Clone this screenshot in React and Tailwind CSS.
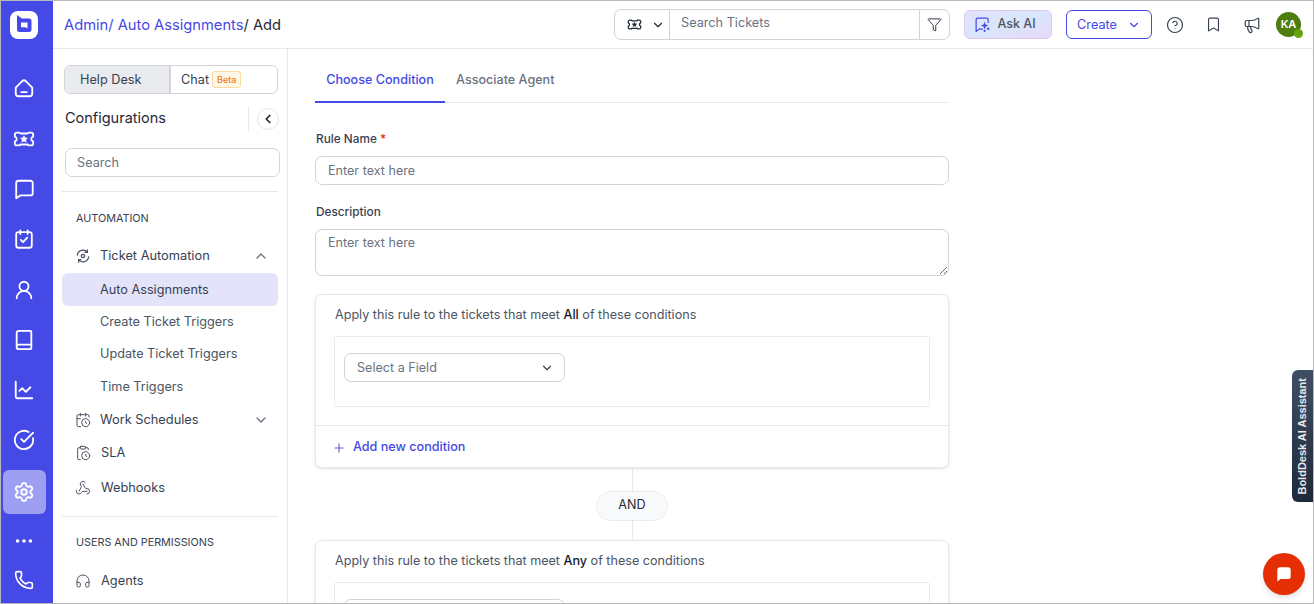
import { Book, Bookmark, CalendarClock, ChartLine, ChevronDown, ChevronLeft, ChevronUp, CircleCheckBig, CircleHelp, ClipboardClock, Ellipsis, Funnel, Headphones, Megaphone, Phone, Plus, Settings, UserRound, Webhook } from "lucide-react";

const Logo = () => (
    <svg viewBox="0 0 28 28" className="w-[28px] h-[28px] mt-[10px]">
        <rect width="28" height="28" rx="8" fill="white" />
        <path d="M7 4 L12 7.500 H19 a2.500 2.500 0 0 1 2.500 2.500 V18.500 a2.500 2.500 0 0 1 -2.500 2.500 H9.500 a2.500 2.500 0 0 1 -2.500 -2.500 Z" fill="#4549e5" />
        <path d="M11 11.500 H17.500 V17.500 L15.500 16.200 H11 Z" fill="white" />
    </svg>
);

const TicketStar = ({ className }) => (
    <svg viewBox="0 0 24 24" fill="none" stroke="currentColor" strokeWidth="2" strokeLinejoin="round" className={className}>
        <path d="M4.500 5H7a2 2 0 0 0 2 1h6a2 2 0 0 0 2-1h2.500A2.500 2.500 0 0 1 22 7.500v1.800a2.800 2.800 0 0 0 0 5.400v1.800a2.500 2.500 0 0 1-2.500 2.500H17a2 2 0 0 0-2-1H9a2 2 0 0 0-2 1H4.500A2.500 2.500 0 0 1 2 16.500v-1.800a2.800 2.800 0 0 0 0-5.400V7.500A2.500 2.500 0 0 1 4.500 5z" />
        <path d="M12 8.500l1.100 2.300 2.500.3-1.800 1.700.5 2.500-2.300-1.200-2.300 1.200.5-2.500-1.800-1.700 2.500-.3z" fill="currentColor" strokeWidth="0.800" />
    </svg>
);

const HomeIcon = ({ className }) => (
    <svg viewBox="0 0 24 24" fill="none" stroke="currentColor" strokeWidth="2" strokeLinecap="round" strokeLinejoin="round" className={className}>
        <path d="M3 11.500 10 4.400a2.800 2.800 0 0 1 4 0l7 7.100V18a3 3 0 0 1-3 3H6a3 3 0 0 1-3-3z" />
        <path d="M9 16.500h6" />
    </svg>
);

const ChatIcon = ({ className }) => (
    <svg viewBox="0 0 24 24" fill="none" stroke="currentColor" strokeWidth="2" strokeLinecap="round" strokeLinejoin="round" className={className}>
        <path d="M6 3h13a2.500 2.500 0 0 1 2.500 2.500v11a2.500 2.500 0 0 1-2.500 2.500H8l-4.500 3V5.500A2.500 2.500 0 0 1 6 3z" />
    </svg>
);

const CalCheck = ({ className }) => (
    <svg viewBox="0 0 24 24" fill="none" stroke="currentColor" strokeWidth="2" strokeLinecap="round" strokeLinejoin="round" className={className}>
        <rect x="3.500" y="4.500" width="17" height="17" rx="2.500" />
        <path d="M8 2.500v4M16 2.500v4M8.500 13l2.500 2.500 4.500-5" />
    </svg>
);

const AskAiIcon = ({ className }) => (
    <svg viewBox="0 0 24 24" fill="none" stroke="currentColor" strokeWidth="1.700" strokeLinecap="round" strokeLinejoin="round" className={className}>
        <path d="M20 9V5a2 2 0 0 0-2-2H5a2 2 0 0 0-2 2v17l4-3.500h5" />
        <path d="M15 9l1.300 3.200 3.200 1.300-3.200 1.300L15 18l-1.300-3.200-3.200-1.300 3.200-1.300z" fill="currentColor" strokeWidth="0.600" />
        <path d="M20 16.500v3M18.500 18h3M15 20v2M14 21h2" strokeWidth="1.400" />
    </svg>
);

const AutomationIcon = ({ className }) => (
    <svg viewBox="0 0 24 24" fill="none" stroke="currentColor" strokeLinecap="round" strokeLinejoin="round" className={className}>
        <path d="M3.500 10.500A8.500 8.500 0 0 1 18.500 6.500M20.500 13.500A8.500 8.500 0 0 1 5.500 17.500" strokeWidth="2" />
        <path d="M18.500 3v3.500H15M5.500 21v-3.500H9" strokeWidth="2" />
        <circle cx="12" cy="12" r="2.500" strokeWidth="2" />
    </svg>
);

const railItems = [
    { Icon: TicketStar, cls: "mt-[29px]" },
    { Icon: ChatIcon, cls: "mt-[28px]" },
    { Icon: CalCheck, cls: "mt-[28px]" },
    { Icon: UserRound, cls: "mt-[29px]" },
    { Icon: Book, cls: "mt-[28px]" },
    { Icon: ChartLine, cls: "mt-[28px]" },
    { Icon: CircleCheckBig, cls: "mt-[28px]" },
];

const Rail = () => {
    return (
        <aside className="w-[52px] h-full bg-[#4549e5] shrink-0 flex flex-col items-center pr-[6px] text-white">
            <Logo />
            <HomeIcon className="w-[22px] h-[22px] mt-[38px]" />
            {railItems.map((item, i) => (
                <item.Icon key={i} className={`w-[22px] h-[22px] stroke-2 ${item.cls}`} />
            ))}
            <div className="w-[43px] h-[44px] mt-[19px] shrink-0 rounded-[6px] bg-[#9c9ff2] flex items-center justify-center">
                <Settings className="w-[22px] h-[22px]" />
            </div>
            <Ellipsis className="w-[22px] h-[22px] mt-[16px]" />
            <Phone className="w-[20px] h-[20px] mt-[18px]" />
        </aside>
    );
};

const MenuLink = ({ Icon, label, arrow, iconGap = "gap-[9px]", cls = "" }) => {
    return (
        <div className={`flex items-center ${iconGap} pl-[13px] pr-[9px] text-[12.800px] text-[#374151] ${cls}`}>
            <Icon className="w-[16px] h-[16px] text-[#4b5563] stroke-[1.500]" />
            <span>{label}</span>
            {arrow && <span className="ml-auto text-[#6b7280]">{arrow}</span>}
        </div>
    );
};

const SubLink = ({ label, cls = "" }) => {
    return <div className={`pl-[38px] text-[12.700px] leading-[20px] text-[#4b5563] ${cls}`}>{label}</div>;
};

const Sidebar = () => {
    return (
        <aside className="w-[235px] h-full shrink-0 border-r border-[#e5e7eb] pl-[9px] pr-[9px] pt-[16px] overflow-hidden">
            <div className="ml-[2px] h-[29px] w-[214px] flex border border-[#d1d5db] rounded-[6px] text-[12.700px] overflow-hidden">
                <div className="w-[106px] bg-[#e9ebef] border-r-2 border-[#d1d5db] text-[#374151] flex items-center pl-[15px]">Help Desk</div>
                <div className="flex-1 flex items-center pl-[10px] gap-[3px] text-[#374151]">
                    Chat
                    <span className="text-[9px] leading-[15px] px-[4px] font-medium rounded-[3px] border border-[#fcd9a0] bg-[#fff7e6] text-[#ea7a14]">Beta</span>
                </div>
            </div>
            <div className="ml-[3px] mt-[11px] h-[27px] flex items-center">
                <h2 className="text-[14.500px] text-[#1f2937] font-normal mb-[2px]">Configurations</h2>
                <div className="ml-auto w-px h-[25px] bg-[#e5e7eb]"></div>
                <button className="ml-[8px] mr-[-1px] w-[22px] h-[22px] rounded-full border border-[#e5e7eb] flex items-center justify-center">
                    <ChevronLeft className="w-[14px] h-[14px] text-[#1f2937] stroke-[3]" />
                </button>
            </div>
            <input placeholder="Search" className="mt-[16px] ml-[3px] w-[215px] h-[29px] block border border-[#d1d5db] rounded-[7px] pl-[11px] pr-[11px] text-[12.700px] placeholder:text-[#6b7280] outline-none" />
            <div className="h-px bg-[#e5e7eb] mt-[14px]"></div>
            <div className="pl-[14px] mt-[20px] text-[10.800px] leading-[14px] text-[#374151]">AUTOMATION</div>
            <MenuLink Icon={AutomationIcon} label="Ticket Automation" arrow={<ChevronUp className="w-[16px] h-[16px]" />} cls="mt-[20px] h-[20px]" />
            <div className="mt-[7px] h-[33px] w-[216px] rounded-[6px] bg-[#e3e4f9] flex items-center">
                <SubLink label="Auto Assignments" cls="!text-[#374151]" />
            </div>
            <SubLink label="Create Ticket Triggers" cls="mt-[6px]" />
            <SubLink label="Update Ticket Triggers" cls="mt-[12px]" />
            <SubLink label="Time Triggers" cls="mt-[13px]" />
            <MenuLink Icon={CalendarClock} label="Work Schedules" arrow={<ChevronDown className="w-[16px] h-[16px]" />} cls="mt-[13px] h-[20px]" />
            <MenuLink Icon={ClipboardClock} label="SLA" iconGap="gap-[10px]" cls="mt-[13px] h-[20px]" />
            <MenuLink Icon={Webhook} label="Webhooks" iconGap="gap-[10px]" cls="mt-[15px] h-[20px]" />
            <div className="h-px bg-[#e5e7eb] mt-[18px]"></div>
            <div className="pl-[14px] mt-[19px] text-[10.800px] leading-[14px] text-[#374151]">USERS AND PERMISSIONS</div>
            <MenuLink Icon={Headphones} label="Agents" iconGap="gap-[10px]" cls="mt-[21px] h-[20px]" />
        </aside>
    );
};

const Header = () => {
    return (
        <header className="h-[48px] shrink-0 border-b border-[#e5e7eb] flex items-center pl-[11px] pr-[12px]">
            <div className="text-[14.700px] text-[#1f2937] mt-[2px]">
                <span className="text-[#4549e5]">Admin/ Auto Assignments</span>/ Add
            </div>
            <div className="ml-auto w-[336px] h-[31px] border border-[#cfd3dc] rounded-[7px] flex items-center text-[#1f2937]">
                <div className="w-[55px] h-full border-r border-[#cfd3dc] flex items-center pl-[12px] gap-[9px]">
                    <TicketStar className="w-[15px] h-[15px]" />
                    <ChevronDown className="w-[14px] h-[14px]" />
                </div>
                <input placeholder="Search Tickets" className="flex-1 min-w-0 pl-[11px] pr-[11px] pb-[3px] text-[12.700px] placeholder:text-[#6b7280] outline-none" />
                <div className="w-[30px] h-full border-l border-[#cfd3dc] flex items-center justify-center">
                    <Funnel className="w-[15px] h-[15px] stroke-[1.500]" />
                </div>
            </div>
            <button className="ml-[14px] w-[88px] h-[29px] pr-[6px] rounded-[6px] border border-[#dcc8f5] bg-gradient-to-br from-[#e0e3fb] via-[#d9e6fb] to-[#e8d8fa] flex items-center justify-center gap-[6px] text-[12.500px] font-medium text-[#4b5563]">
                <AskAiIcon className="w-[17px] h-[17px] text-[#4549e5]" />
                Ask AI
            </button>
            <button className="ml-[14px] w-[86px] h-[29px] rounded-[6px] border border-[#4549e5] flex items-center justify-center gap-[10px] text-[12.700px] text-[#4549e5]">
                Create
                <ChevronDown className="w-[14px] h-[14px]" />
            </button>
            <CircleHelp className="ml-[14px] w-[18px] h-[18px] text-[#374151] stroke-[1.600]" />
            <Bookmark className="ml-[21px] w-[17px] h-[17px] text-[#374151] stroke-[1.600]" />
            <Megaphone className="ml-[21px] w-[18px] h-[18px] text-[#374151] stroke-[1.600]" />
            <div className="relative ml-[15px] w-[25px] h-[25px] rounded-full bg-[#4d7c0f] flex items-center justify-center text-[11px] font-semibold text-white">
                KA
                <span className="absolute right-[-2px] bottom-[-1px] w-[9px] h-[9px] rounded-full bg-[#65a30d]"></span>
            </div>
        </header>
    );
};

const ConditionCard = ({ word, children }) => {
    return (
        <section className="rounded-[7px] border border-[#e5e7eb] shadow-[0_1px_3px_rgba(0,0,0,0.12)]">
            <p className="pl-[19px] pt-[12px] text-[12.600px] leading-[16px] text-[#4b5563]">
                Apply this rule to the tickets that meet <span className="font-medium text-[#111827]">{word}</span> of these conditions
            </p>
            {children}
        </section>
    );
};

const FieldBox = ({ label }) => {
    return (
        <div className="mx-[18px] mt-[13px] h-[71px] border border-[#e9ebef] rounded-[3px] pl-[9px] pt-[16px]">
            <div className="w-[221px] h-[29px] pt-[1px] border border-[#cfd3dc] rounded-[7px] flex items-center justify-between pl-[12px] pr-[10px] text-[12.600px] text-[#6b7280]">
                {label}
                <ChevronDown className="w-[14px] h-[14px] text-[#374151]" />
            </div>
        </div>
    );
};

const RuleForm = () => {
    return (
        <main className="flex-1 min-w-0 h-full overflow-hidden pl-[27px]">
            <div className="w-[634px]">
                <div className="h-[54px] border-b border-[#e5e7eb] flex">
                    <div className="w-[130px] border-b-2 border-[#4549e5] h-[54px] pt-[10px] flex items-center justify-center text-[12.600px] font-medium text-[#4549e5]">Choose Condition</div>
                    <div className="pl-[11px] h-[54px] pt-[8px] flex items-center text-[12.600px] font-medium text-[#6b7280]">Associate Agent</div>
                </div>
                <label className="block mt-[28px] ml-[1px] text-[11.800px] leading-[16px] font-medium text-[#374151]">
                    Rule Name <span className="text-[#dc2626]">*</span>
                </label>
                <input placeholder="Enter text here" className="block mt-[9px] w-full h-[29px] border border-[#cfd3dc] rounded-[7px] pl-[12px] pr-[12px] pb-[1px] text-[12.600px] placeholder:text-[#6b7280] outline-none" />
                <label className="block mt-[19px] ml-[1px] text-[11.800px] leading-[16px] font-medium text-[#374151]">Description</label>
                <textarea placeholder="Enter text here" className="block mt-[9px] w-full h-[47px] border border-[#cfd3dc] rounded-[7px] pl-[12px] pr-[12px] pt-[4px] text-[12.600px] leading-[18px] placeholder:text-[#6b7280] outline-none"></textarea>
                <div className="mt-[18px]">
                    <ConditionCard word="All">
                        <FieldBox label="Select a Field" />
                        <div className="mt-[18px] h-[42px] pt-[2px] border-t border-[#e5e7eb] pl-[16px] flex items-center gap-[7px] text-[12.600px] font-medium text-[#4549e5]">
                            <Plus className="w-[14px] h-[14px] text-[#6d5be8]" />
                            Add new condition
                        </div>
                    </ConditionCard>
                </div>
                <div className="flex flex-col items-center">
                    <div className="w-px h-[23px] bg-[#e5e7eb]"></div>
                    <div className="w-[72px] h-[30px] pb-[1px] rounded-full border border-[#e9ebef] bg-[#f9fafb] flex items-center justify-center text-[12.600px] text-[#1f2937]">AND</div>
                    <div className="w-px h-[19px] bg-[#e5e7eb]"></div>
                </div>
                <ConditionCard word="Any">
                    <FieldBox />
                </ConditionCard>
            </div>
        </main>
    );
};

const App = () => {
    return (
        <div className="relative w-[1314px] h-[604px] overflow-hidden bg-white border border-[#b8b8b8] font-['Inter',sans-serif] flex">
            <Rail />
            <div className="flex-1 min-w-0 flex flex-col h-full">
                <Header />
                <div className="flex-1 min-h-0 flex">
                    <Sidebar />
                    <RuleForm />
                </div>
            </div>

            <div className="absolute right-0 top-[369px] w-[21px] h-[132px] rounded-l-[6px] bg-gradient-to-b from-[#3f4f63] to-[#1e293b] flex items-center justify-center">
                <span className="[writing-mode:vertical-rl] rotate-180 whitespace-nowrap text-[11px] font-semibold text-[#e5e7eb] font-['Liberation_Sans',sans-serif]">BoldDesk AI Assistant</span>
            </div>
            <button className="absolute right-[8px] bottom-[8px] w-[42px] h-[42px] rounded-full bg-[#e62e05] shadow-md flex items-center justify-center">
                <svg viewBox="0 0 24 24" className="w-[20px] h-[20px]" fill="white"><path d="M7 4h10a3 3 0 0 1 3 3v8a3 3 0 0 1-3 3H8l-4 3V7a3 3 0 0 1 3-3z" /></svg>
            </button>
        </div>
    );
};

export default App;
